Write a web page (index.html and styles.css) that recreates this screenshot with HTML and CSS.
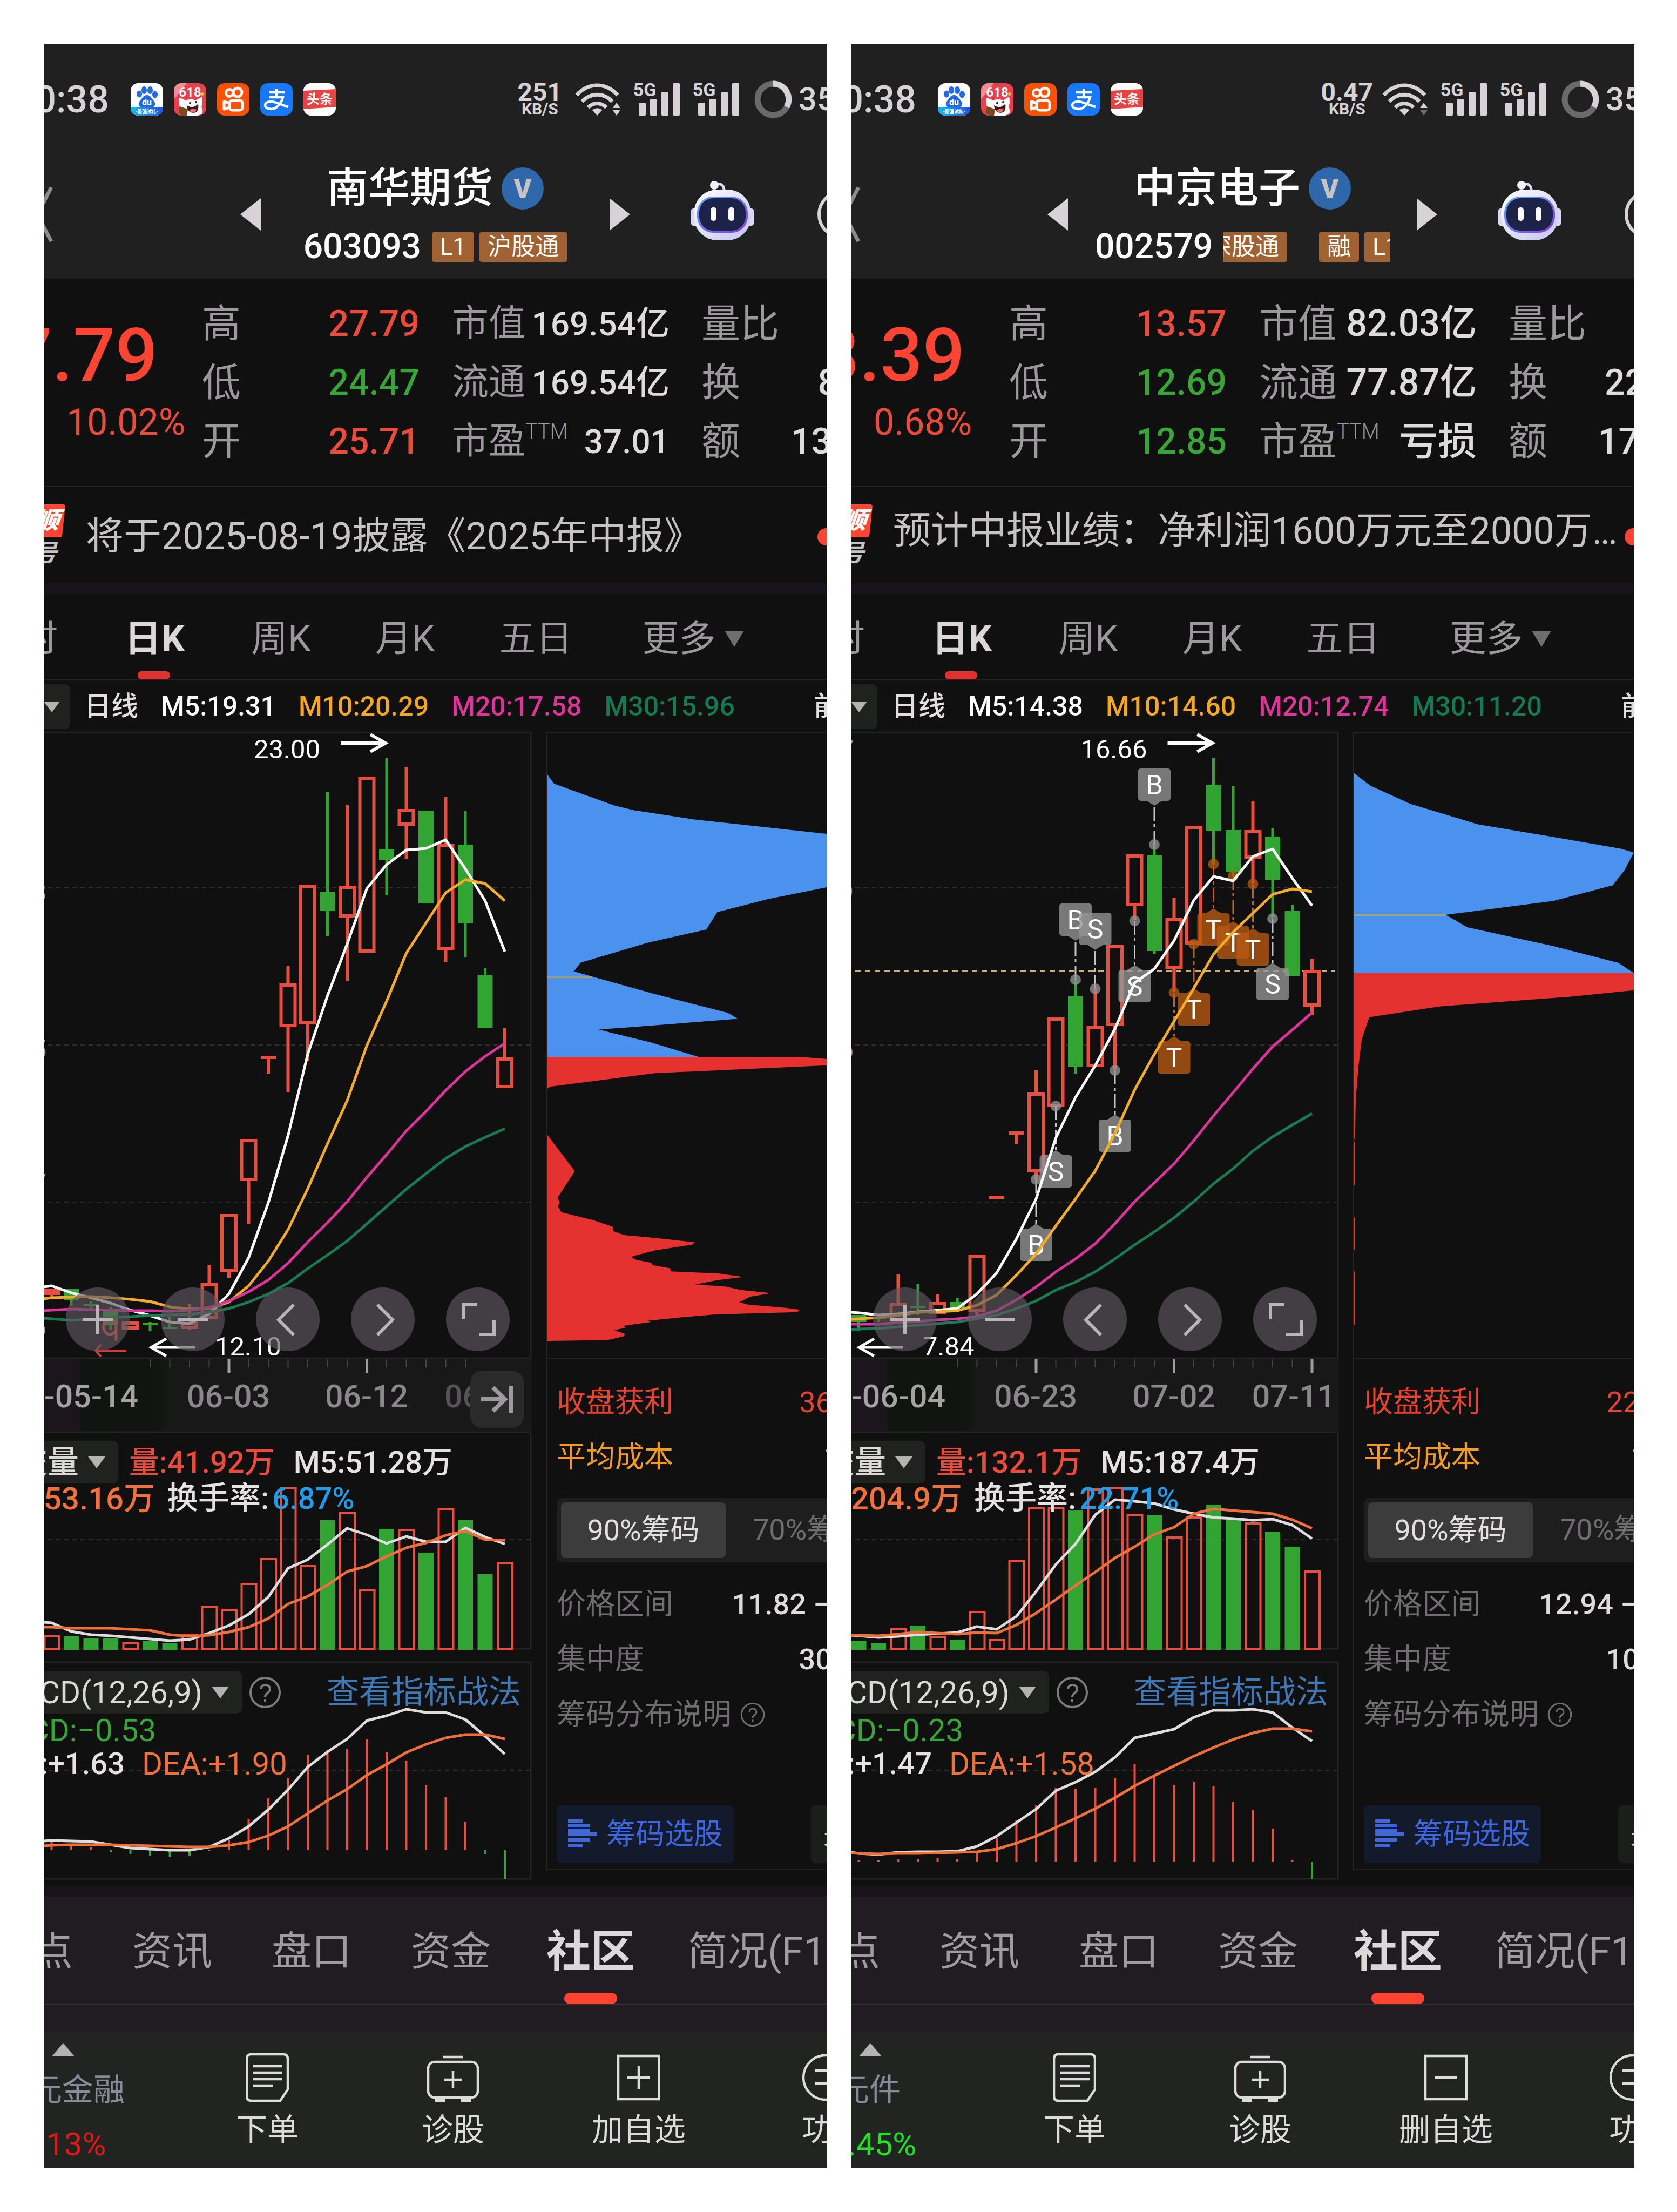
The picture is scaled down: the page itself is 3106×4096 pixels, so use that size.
FILE: index.html
```html
<!DOCTYPE html>
<html lang="zh-CN">
<head>
<meta charset="utf-8">
<title>行情对比</title>
<meta name="viewport" content="width=device-width, initial-scale=1">
<link rel="stylesheet" href="styles.css">
</head>
<body>

<svg class="sprite" aria-hidden="true">
  <defs>
    <linearGradient id="duFoot" x1="0" y1="0" x2="1" y2="0"><stop offset="0" stop-color="#19b8e8"/><stop offset="1" stop-color="#2450e6"/></linearGradient>
    <linearGradient id="head" x1="0" y1="0" x2="1" y2="1"><stop offset="0" stop-color="#ffffff"/><stop offset="1" stop-color="#c3c3ee"/></linearGradient>
    <linearGradient id="rim" x1="0" y1="0" x2="1" y2="1"><stop offset="0" stop-color="#58a8f0"/><stop offset="1" stop-color="#8a3be0"/></linearGradient>
  </defs>
  <symbol id="app-baidu" viewBox="0 0 60 60">
    <rect width="60" height="60" rx="14" fill="#fff"/>
    <path d="M0 44h60v2a14 14 0 0 1-14 14H14A14 14 0 0 1 0 46z" fill="url(#duFoot)"/>
    <g fill="#2468e8"><ellipse cx="16" cy="20" rx="5" ry="6.500"/><ellipse cx="25" cy="13" rx="5" ry="7"/><ellipse cx="36" cy="13" rx="5" ry="7"/><ellipse cx="45" cy="21" rx="5" ry="6.500"/><path d="M30 22c7 0 9 7 13 11 5 6 1 12-5 12-3 0-5-1-8-1s-5 1-8 1c-6 0-10-6-5-12 4-4 6-11 13-11z"/></g>
    <text x="30" y="41" class="app-text" font-size="16" fill="#fff">du</text>
    <text x="30" y="56" class="app-text" font-size="9" fill="#fff">·最强试炼·</text>
  </symbol>
  <symbol id="app-618" viewBox="0 0 60 60">
    <rect width="60" height="60" rx="14" fill="#ea3f4d"/>
    <path d="M0 14A14 14 0 0 1 14 0h10L0 30z" fill="#f78d90"/>
    <circle cx="53" cy="20" r="3" fill="#f8b23a"/>
    <path d="M9 27c7 1 9 3 13 5 6-3 13-3 18 0l12-7c2 8 1 14-1 19 3 5 3 9 1 13l-8 3H16l-2-8-4-11z" fill="#fff"/>
    <path d="M24 41c8 5 15 4 21-3 2 12-3 17-9 17-7 0-11-5-12-14z" fill="#3a1c1c"/>
    <path d="M29 50c4-3 9-4 13-1-3 7-10 8-13 1z" fill="#ef6b74"/>
    <circle cx="30" cy="37" r="2" fill="#222"/><circle cx="41" cy="35" r="2" fill="#222"/>
    <path d="M11 43l15 5-2 12H14c-3-2-5-5-5-8z" fill="#7c4a22"/>
    <text x="30" y="25" class="app-text" font-size="24" fill="#fff">618</text>
  </symbol>
  <symbol id="app-kuaishou" viewBox="0 0 60 60">
    <rect width="60" height="60" rx="14" fill="#ff5005"/>
    <g fill="none" stroke="#fff" stroke-width="5"><circle cx="23" cy="18" r="6.500"/><circle cx="38" cy="17" r="8"/><rect x="23" y="32" width="24" height="18" rx="5"/><path d="M23 37l-10-3v14l10-3" stroke-linejoin="round"/></g>
  </symbol>
  <symbol id="app-alipay" viewBox="0 0 60 60">
    <rect width="60" height="60" rx="14" fill="#1677ff"/>
    <g fill="none" stroke="#fff" stroke-width="4.500"><path d="M16 17h29M30 10v16M17 26h25c-2 9-11 22-21 22-7 0-12-3-12-7 0-5 5-7 11-7 8 0 16 5 32 10"/></g>
  </symbol>
  <symbol id="app-toutiao" viewBox="0 0 60 60">
    <rect width="60" height="60" rx="14" fill="#fff"/>
    <path d="M0 14l60-3v33L0 48z" fill="#ea4243"/>
    <text x="30" y="38" class="app-text" font-size="24" fill="#fff">头条</text>
  </symbol>
  <symbol id="i-wifi" viewBox="0 0 84 60">
    <g fill="none" stroke="#d6d2d5" stroke-width="7"><path d="M3 22c22-24 54-24 76 0"/><path d="M13 34c16-17 40-17 56 0"/><path d="M24 45c10-10 24-10 34 0"/></g>
    <path d="M41 60l-9-10c5-5 13-5 18 0z" fill="#d6d2d5"/>
    <path d="M77 36l7 10H70z" class="wifi-up"/><path d="M77 60l7-10H70z" class="wifi-down"/>
  </symbol>
  <symbol id="i-bars" viewBox="0 0 76 60">
    <g fill="#d6d2d5"><rect y="36" width="13" height="24" rx="2"/><rect x="21" y="29" width="13" height="31" rx="2"/><rect x="42" y="16" width="13" height="44" rx="2"/><rect x="63" width="13" height="60" rx="2"/></g>
  </symbol>
  <symbol id="i-ring" viewBox="0 0 70 70">
    <circle cx="35" cy="35" r="29" fill="none" stroke="#6b6a6b" stroke-width="11"/>
    <path d="M35 6a29 29 0 0 1 25 43" fill="none" stroke="#d6d2d5" stroke-width="11"/>
  </symbol>
  <symbol id="i-robot" viewBox="0 0 120 124">
    <path d="M46 8c10-6 18 0 17 12" fill="none" stroke="#d9d9ee" stroke-width="5"/>
    <circle cx="45" cy="8" r="8" fill="#f1f1fb"/>
    <rect x="1" y="50" width="16" height="34" rx="8" fill="#d9d8f4"/><rect x="103" y="50" width="16" height="34" rx="8" fill="#d9d8f4"/>
    <rect x="7" y="16" width="106" height="94" rx="44" fill="url(#head)"/>
    <rect x="13" y="29" width="94" height="67" rx="30" fill="url(#rim)"/>
    <rect x="17" y="32" width="86" height="60" rx="26" fill="#1d2348"/>
    <rect x="38" y="49" width="11" height="25" rx="5" fill="#fff"/><rect x="71" y="49" width="11" height="25" rx="5" fill="#fff"/>
  </symbol>
  <symbol id="i-help" viewBox="0 0 60 60">
    <circle cx="30" cy="30" r="27" fill="none" stroke="currentColor" stroke-width="4"/>
    <path d="M22 24c0-11 17-11 17 0 0 7-9 7-9 14M30 42v5" fill="none" stroke="currentColor" stroke-width="4"/>
  </symbol>
  <symbol id="i-chips" viewBox="0 0 54 54">
    <g fill="#3c66e2"><rect width="27" height="6"/><rect y="9" width="40" height="6"/><rect y="17" width="40" height="6"/><rect y="24" width="54" height="6"/><rect y="35" width="40" height="6"/><rect y="46" width="27" height="6"/></g>
  </symbol>
  <symbol id="i-order" viewBox="0 0 80 90">
    <g fill="none" stroke="#dedbdd" stroke-width="4.500"><path d="M10 2h60q8 0 8 9v56L64 88H10q-8 0-8-9V11q0-9 8-9z"/><path d="M13 24h55M13 36h55M13 48h55M13 60h38"/></g>
  </symbol>
  <symbol id="i-doctor" viewBox="0 0 96 90">
    <g fill="none" stroke="#dedbdd" stroke-width="4.500"><rect x="2" y="16" width="92" height="66" rx="12"/><path d="M30 7h37M48 33v32M32 49h32"/></g>
    <path d="M15 82h18v8H15zM63 82h18v8H63z" fill="#dedbdd"/>
  </symbol>
  <symbol id="i-add" viewBox="0 0 80 84">
    <path d="M2 2h76v80H2zM40 21v42M19 42h42" fill="none" stroke="#dedbdd" stroke-width="4.500"/>
  </symbol>
  <symbol id="i-remove" viewBox="0 0 80 84">
    <path d="M2 2h76v80H2zM19 42h42" fill="none" stroke="#dedbdd" stroke-width="4.500"/>
  </symbol>
  <symbol id="i-more" viewBox="0 0 88 88">
    <g fill="none" stroke="#dedbdd" stroke-width="4.500"><circle cx="44" cy="44" r="41"/><path d="M24 31h40M24 55h40"/></g>
  </symbol>
</svg>

<main class="board">

  <section class="phone" aria-label="南华期货">
    <header class="top">
      <div class="status">
        <span class="clock">0:38</span>
        <div class="apps">
          <svg><use href="#app-baidu"/></svg><svg><use href="#app-618"/></svg><svg><use href="#app-kuaishou"/></svg><svg><use href="#app-alipay"/></svg><svg><use href="#app-toutiao"/></svg>
        </div>
        <div class="signals">
          <div class="speed"><b>251</b><span>KB/S</span></div>
          <svg class="wifi"><use href="#i-wifi"/></svg>
          <div class="cell"><span>5G</span><svg><use href="#i-bars"/></svg></div>
          <div class="cell"><span>5G</span><svg><use href="#i-bars"/></svg></div>
          <svg class="ring"><use href="#i-ring"/></svg>
          <span class="battery">35</span>
        </div>
      </div>
      <div class="titlebar">
        <button class="plain" aria-label="返回"><svg class="back" viewBox="0 0 17 106"><path d="M14 3L-12 53l26 50" fill="none" stroke="#8d8b8d" stroke-width="7"/></svg></button>
        <button class="plain" aria-label="上一只"><svg class="step" viewBox="0 0 38 60"><path d="M38 0v60L0 30z" fill="#d6d2d5"/></svg></button>
        <div class="name">
          <h1>南华期货<span class="vip">V</span></h1>
          <div class="code"><span>603093</span><div class="marks"><i>L1</i><i>沪股通</i></div></div>
        </div>
        <button class="plain" aria-label="下一只"><svg class="step" viewBox="0 0 38 60"><path d="M0 0v60l38-30z" fill="#d6d2d5"/></svg></button>
        <span></span>
        <button class="plain" aria-label="助手"><svg class="robot"><use href="#i-robot"/></svg></button>
        <span></span>
        <button class="plain" aria-label="搜索"><svg class="search" viewBox="0 0 17 90"><circle cx="45" cy="45" r="42" fill="none" stroke="#d6d2d5" stroke-width="6"/></svg></button>
      </div>
    </header>

    <section class="quote">
      <div class="last"><strong>27.79</strong><span>10.02%</span></div>
      <dl class="range">
        <div><dt>高</dt><dd class="up">27.79</dd></div>
        <div><dt>低</dt><dd class="down">24.47</dd></div>
        <div><dt>开</dt><dd class="up">25.71</dd></div>
      </dl>
      <dl class="value compact">
        <div><dt>市值</dt><dd>169.54亿</dd></div>
        <div><dt>流通</dt><dd>169.54亿</dd></div>
        <div><dt>市盈<sup>TTM</sup></dt><dd>37.01</dd></div>
      </dl>
      <dl class="flow">
        <div><dt>量比</dt></div>
        <div><dt>换</dt><dd>8</dd></div>
        <div><dt>额</dt><dd class="amount">13</dd></div>
      </dl>
    </section>

    <a class="news" href="#news">
      <span class="flag"><b>顺</b><i>号</i></span>
      <span class="headline">将于2025-08-19披露《2025年中报》</span>
      <span class="dot"></span>
    </a>

    <nav class="periods">
      <button>时</button><button class="on">日K</button><button>周K</button><button>月K</button><button>五日</button><button class="more">更多<svg class="tri" viewBox="0 0 36 30"><path d="M0 0h36L18 30z" fill="#6f6d6f"/></svg></button>
    </nav>

    <div class="averages">
      <button class="fold" aria-label="周期"><svg viewBox="0 0 30 20"><path d="M0 0h30L15 20z" fill="#b5b2b4"/></svg></button>
      <span>日线</span><span class="m5">M5:19.31</span><span class="m10">M10:20.29</span><span class="m20">M20:17.58</span><span class="m30">M30:15.96</span><span class="adjust">前</span>
    </div>

    <div class="market">
      <div class="charts">
        <div class="kline">
          <svg viewBox="0 0 904 1162" data-chart="kline" data-code="603093"></svg>
          <div class="controls">
            <button aria-label="放大"><svg viewBox="0 0 118 118"><path d="M59 32v54M31 59h56"/></svg></button>
            <button aria-label="缩小"><svg viewBox="0 0 118 118"><path d="M31 59h56"/></svg></button>
            <button aria-label="左移"><svg viewBox="0 0 118 118"><path d="M70 32L42 60l28 28"/></svg></button>
            <button aria-label="右移"><svg viewBox="0 0 118 118"><path d="M49 32l28 28-28 28"/></svg></button>
            <button aria-label="全屏"><svg viewBox="0 0 118 118"><path d="M32 58V32h26M61 87h28V61"/></svg></button>
          </div>
        </div>
        <div class="axis">
          <svg viewBox="0 0 904 133" data-chart="axis" data-code="603093"></svg>
          <button class="latest" aria-label="最新"><svg viewBox="0 0 60 50"><path d="M0 25h42M22 3l22 22-22 22M56 0v50"/></svg></button>
        </div>
        <div class="layer">
          <svg viewBox="0 0 904 406" data-chart="volume" data-code="603093"></svg>
          <div class="legend">
            <div class="row"><button class="tag vol">交量<svg viewBox="0 0 32 22"><path d="M0 0h32L16 22z" fill="#b5b2b4"/></svg></button><span class="up">量:41.92万</span><span>M5:51.28万</span></div>
            <div class="row second"><span class="ma">53.16万</span><span>换手率:<em>6.87%</em></span></div>
          </div>
        </div>
        <div class="layer macd">
          <svg viewBox="0 0 904 405" data-chart="macd" data-code="603093"></svg>
          <div class="legend">
            <div class="row"><button class="tag ind">CD(12,26,9)<svg viewBox="0 0 32 22"><path d="M0 0h32L16 22z" fill="#b5b2b4"/></svg></button><svg class="help"><use href="#i-help"/></svg><a href="#guide">查看指标战法</a></div>
            <div class="row bar"><span class="down">CD:−0.53</span></div>
            <div class="row diff"><span>:+1.63</span><span class="ma">DEA:+1.90</span></div>
          </div>
        </div>
      </div>
      <aside class="chips">
        <svg class="profile" viewBox="60 -34 1453 1582" preserveAspectRatio="none">
          <path fill="#4a92ee" d="M60 70L97 95 410 150 510 162 820 185 1440 218 1515 222V357L1210 387 945 420 888 464 580 498 235 548 200 570 600 625 1000 675 1052 690 820 699 480 712 330 717 390 725 600 750 850 787H60z"/>
          <path fill="#e53230" d="M60 787H1385L1515 792V808L620 828 300 848 75 862 60 868zM60 983L205 1076 115 1143 127 1155 117 1165 135 1180 300 1200 403 1217 405 1228 460 1238 620 1245 828 1256 815 1262 620 1277 497 1293 520 1300 600 1308 610 1314 700 1322 703 1330 950 1335 1082 1344 945 1352 830 1363 985 1368 1070 1377 1225 1385 1115 1394 1060 1408 1105 1414 1300 1422 1375 1427 1360 1433 930 1439 740 1447 580 1455 600 1458 455 1468 470 1472 410 1479 465 1488 460 1494 375 1504 60 1506z"/>
          <path fill="#b3a25c" d="M60 583h232v4H60z"/>
        </svg>
        <div class="chipinfo">
          <p class="profit"><span>收盘获利</span><b>36</b></p>
          <p class="cost"><span>平均成本</span><b>1</b></p>
          <div class="seg"><button class="on">90%筹码</button><button>70%筹</button></div>
          <p><span>价格区间</span><b>11.82 –</b></p>
          <p><span>集中度</span><b>30</b></p>
          <p class="explain"><span>筹码分布说明</span><svg><use href="#i-help"/></svg></p>
          <div class="actions"><button class="pick"><svg><use href="#i-chips"/></svg>筹码选股</button><button class="close">关</button></div>
        </div>
      </aside>
    </div>

    <nav class="sections">
      <a href="#points">点</a><a href="#info">资讯</a><a href="#depth">盘口</a><a href="#funds">资金</a><a class="on" href="#club">社区</a><a href="#brief">简况(F1</a>
    </nav>

    <footer class="toolbar">
      <div class="sector"><svg viewBox="0 0 42 25"><path d="M0 25h42L21 0z" fill="#b5b2b4"/></svg><span>元金融</span><b class="hot">13%</b></div>
      <button><svg class="w80"><use href="#i-order"/></svg>下单</button>
      <button><svg class="w96"><use href="#i-doctor"/></svg>诊股</button>
      <button><svg class="w80"><use href="#i-add"/></svg>加自选</button>
      <button class="edge"><svg class="w88"><use href="#i-more"/></svg>功</button>
    </footer>
  </section>

  <section class="phone" aria-label="中京电子">
    <header class="top">
      <div class="status">
        <span class="clock">0:38</span>
        <div class="apps">
          <svg><use href="#app-baidu"/></svg><svg><use href="#app-618"/></svg><svg><use href="#app-kuaishou"/></svg><svg><use href="#app-alipay"/></svg><svg><use href="#app-toutiao"/></svg>
        </div>
        <div class="signals">
          <div class="speed"><b>0.47</b><span>KB/S</span></div>
          <svg class="wifi idle"><use href="#i-wifi"/></svg>
          <div class="cell"><span>5G</span><svg><use href="#i-bars"/></svg></div>
          <div class="cell"><span>5G</span><svg><use href="#i-bars"/></svg></div>
          <svg class="ring"><use href="#i-ring"/></svg>
          <span class="battery">35</span>
        </div>
      </div>
      <div class="titlebar">
        <button class="plain" aria-label="返回"><svg class="back" viewBox="0 0 17 106"><path d="M14 3L-12 53l26 50" fill="none" stroke="#8d8b8d" stroke-width="7"/></svg></button>
        <button class="plain" aria-label="上一只"><svg class="step" viewBox="0 0 38 60"><path d="M38 0v60L0 30z" fill="#d6d2d5"/></svg></button>
        <div class="name">
          <h1>中京电子<span class="vip">V</span></h1>
          <div class="code"><span>002579</span><div class="marks ticker"><i>深股通</i><i class="margin">融</i><i>L1</i></div></div>
        </div>
        <button class="plain" aria-label="下一只"><svg class="step" viewBox="0 0 38 60"><path d="M0 0v60l38-30z" fill="#d6d2d5"/></svg></button>
        <span></span>
        <button class="plain" aria-label="助手"><svg class="robot"><use href="#i-robot"/></svg></button>
        <span></span>
        <button class="plain" aria-label="搜索"><svg class="search" viewBox="0 0 17 90"><circle cx="45" cy="45" r="42" fill="none" stroke="#d6d2d5" stroke-width="6"/></svg></button>
      </div>
    </header>

    <section class="quote">
      <div class="last"><strong>13.39</strong><span>0.68%</span></div>
      <dl class="range">
        <div><dt>高</dt><dd class="up">13.57</dd></div>
        <div><dt>低</dt><dd class="down">12.69</dd></div>
        <div><dt>开</dt><dd class="down">12.85</dd></div>
      </dl>
      <dl class="value">
        <div><dt>市值</dt><dd>82.03亿</dd></div>
        <div><dt>流通</dt><dd>77.87亿</dd></div>
        <div><dt>市盈<sup>TTM</sup></dt><dd class="word">亏损</dd></div>
      </dl>
      <dl class="flow">
        <div><dt>量比</dt></div>
        <div><dt>换</dt><dd>22</dd></div>
        <div><dt>额</dt><dd class="amount">17</dd></div>
      </dl>
    </section>

    <a class="news raised" href="#news">
      <span class="flag"><b>顺</b><i>号</i></span>
      <span class="headline">预计中报业绩：净利润1600万元至2000万…</span>
      <span class="dot"></span>
    </a>

    <nav class="periods">
      <button>时</button><button class="on">日K</button><button>周K</button><button>月K</button><button>五日</button><button class="more">更多<svg class="tri" viewBox="0 0 36 30"><path d="M0 0h36L18 30z" fill="#6f6d6f"/></svg></button>
    </nav>

    <div class="averages">
      <button class="fold" aria-label="周期"><svg viewBox="0 0 30 20"><path d="M0 0h30L15 20z" fill="#b5b2b4"/></svg></button>
      <span>日线</span><span class="m5">M5:14.38</span><span class="m10">M10:14.60</span><span class="m20">M20:12.74</span><span class="m30">M30:11.20</span><span class="adjust">前</span>
    </div>

    <div class="market">
      <div class="charts">
        <div class="kline">
          <svg viewBox="0 0 904 1162" data-chart="kline" data-code="002579"></svg>
          <div class="controls">
            <button aria-label="放大"><svg viewBox="0 0 118 118"><path d="M59 32v54M31 59h56"/></svg></button>
            <button aria-label="缩小"><svg viewBox="0 0 118 118"><path d="M31 59h56"/></svg></button>
            <button aria-label="左移"><svg viewBox="0 0 118 118"><path d="M70 32L42 60l28 28"/></svg></button>
            <button aria-label="右移"><svg viewBox="0 0 118 118"><path d="M49 32l28 28-28 28"/></svg></button>
            <button aria-label="全屏"><svg viewBox="0 0 118 118"><path d="M32 58V32h26M61 87h28V61"/></svg></button>
          </div>
        </div>
        <div class="axis">
          <svg viewBox="0 0 904 133" data-chart="axis" data-code="002579"></svg>
        </div>
        <div class="layer">
          <svg viewBox="0 0 904 406" data-chart="volume" data-code="002579"></svg>
          <div class="legend">
            <div class="row"><button class="tag vol">交量<svg viewBox="0 0 32 22"><path d="M0 0h32L16 22z" fill="#b5b2b4"/></svg></button><span class="up">量:132.1万</span><span>M5:187.4万</span></div>
            <div class="row second"><span class="ma">204.9万</span><span>换手率:<em>22.71%</em></span></div>
          </div>
        </div>
        <div class="layer macd">
          <svg viewBox="0 0 904 405" data-chart="macd" data-code="002579"></svg>
          <div class="legend">
            <div class="row"><button class="tag ind">CD(12,26,9)<svg viewBox="0 0 32 22"><path d="M0 0h32L16 22z" fill="#b5b2b4"/></svg></button><svg class="help"><use href="#i-help"/></svg><a href="#guide">查看指标战法</a></div>
            <div class="row bar"><span class="down">CD:−0.23</span></div>
            <div class="row diff"><span>:+1.47</span><span class="ma">DEA:+1.58</span></div>
          </div>
        </div>
      </div>
      <aside class="chips">
        <svg class="profile" viewBox="0 0 519 1160" preserveAspectRatio="none">
          <path fill="#4a92ee" d="M0 75L30 98 105 132 230 170 350 190 495 215 519 222 502 255 480 283 370 312 170 338 210 361 370 396 490 427 519 446H0z"/>
          <path fill="#e53230" d="M0 446H519V478L400 490 160 508 28 528 14 570 8 620 3 680 2 740 0 760z"/>
          <path fill="#e53230" d="M0 760h2v80H0zM0 900h2v60H0zM0 1000h2v100H0z"/>
          <path fill="#b3a25c" d="M0 337h170v3H0z"/>
        </svg>
        <div class="chipinfo">
          <p class="profit"><span>收盘获利</span><b>22</b></p>
          <p class="cost"><span>平均成本</span><b>1</b></p>
          <div class="seg"><button class="on">90%筹码</button><button>70%筹</button></div>
          <p><span>价格区间</span><b>12.94 –</b></p>
          <p><span>集中度</span><b>10</b></p>
          <p class="explain"><span>筹码分布说明</span><svg><use href="#i-help"/></svg></p>
          <div class="actions"><button class="pick"><svg><use href="#i-chips"/></svg>筹码选股</button><button class="close">关</button></div>
        </div>
      </aside>
    </div>

    <nav class="sections">
      <a href="#points">点</a><a href="#info">资讯</a><a href="#depth">盘口</a><a href="#funds">资金</a><a class="on" href="#club">社区</a><a href="#brief">简况(F1</a>
    </nav>

    <footer class="toolbar">
      <div class="sector"><svg viewBox="0 0 42 25"><path d="M0 25h42L21 0z" fill="#b5b2b4"/></svg><span>元件</span><b class="cool">.45%</b></div>
      <button><svg class="w80"><use href="#i-order"/></svg>下单</button>
      <button><svg class="w96"><use href="#i-doctor"/></svg>诊股</button>
      <button><svg class="w80"><use href="#i-remove"/></svg>删自选</button>
      <button class="edge"><svg class="w88"><use href="#i-more"/></svg>功</button>
    </footer>
  </section>

</main>
<script src="charts.js"></script>
</body>
</html>
```

FILE: styles.css
```css
* { box-sizing: border-box; }

body {
  margin: 0;
  background: #fff;
  color: #dedbdd;
  font-family: Roboto, "Noto Sans CJK SC", sans-serif;
}

h1, p, dl, dd { margin: 0; }
svg { display: block; flex: none; }
i, em { font-style: normal; }
a { color: inherit; text-decoration: none; }
button {
  margin: 0;
  padding: 0;
  border: 0;
  background: none;
  color: inherit;
  font: inherit;
  white-space: nowrap;
}

.sprite { position: absolute; width: 0; height: 0; }
.app-text { font-family: Roboto, "Noto Sans CJK SC", sans-serif; font-weight: 700; text-anchor: middle; }

.board {
  display: grid;
  grid-template-columns: minmax(0, 1fr) minmax(0, 1fr);
  gap: 45px;
  padding: 81px 80px 81px 81px;
}
.phone { overflow: hidden; background: #101010; }
.up { color: #ec4a3a; }
.down { color: #36a636; }

/* status bar and title */
.top { background: #202020; }
.status {
  display: flex;
  align-items: center;
  padding-top: 68px;
  color: #d6d2d5;
  font-weight: 500;
  white-space: nowrap;
}
.clock { display: flex; flex: none; justify-content: flex-end; width: 121px; font-size: 70px; line-height: 64px; }
.apps { display: flex; gap: 20px; margin-left: 40px; }
.apps svg { width: 60px; height: 60px; }
.signals { display: flex; align-items: center; gap: 24px; margin-left: auto; margin-right: -16px; }
.speed { display: flex; flex-direction: column; align-items: center; width: 94px; margin-right: -6px; }
.speed b { font-size: 48px; line-height: 36px; font-weight: 700; }
.speed span { font-size: 30px; line-height: 26px; font-weight: 700; }
.wifi { width: 84px; height: 60px; color: #d6d2d5; }
.wifi.idle { color: #6b6a6b; }
.wifi-up { fill: #d6d2d5; }
.wifi-down { fill: currentColor; }
.cell { display: grid; width: 86px; }
.cell span { grid-area: 1 / 1; font-size: 34px; line-height: 24px; font-weight: 700; }
.cell svg { grid-area: 1 / 1; justify-self: end; width: 76px; height: 60px; }
.ring { width: 70px; height: 70px; margin-left: 4px; }
.battery { margin-left: -12px; font-size: 60px; line-height: 64px; }

.titlebar {
  display: grid;
  grid-template-columns: minmax(0, 364fr) minmax(0, 38fr) minmax(0, 646fr) minmax(0, 39fr) minmax(0, 110fr) minmax(0, 120fr) minmax(0, 116fr) minmax(0, 17fr);
  align-items: center;
  padding: 86px 0 27px;
}
.back { width: 17px; height: 106px; }
.step { width: 38px; height: 60px; }
.robot { width: 120px; height: 124px; }
.search { width: 17px; height: 90px; }
.name { display: flex; flex-direction: column; align-items: center; gap: 36px; padding-top: 4px; color: #fff; white-space: nowrap; }
.name h1 { display: flex; align-items: center; gap: 16px; font-size: 77px; line-height: 80px; font-weight: 500; }
.vip {
  width: 78px;
  height: 78px;
  border-radius: 50%;
  background: #2f68aa;
  color: #c6c2c5;
  font-size: 50px;
  line-height: 80px;
  font-weight: 900;
  text-align: center;
}
.code { display: flex; align-items: center; gap: 20px; font-size: 64px; line-height: 64px; font-weight: 500; }
.marks { display: flex; gap: 10px; font-size: 44px; line-height: 55px; font-weight: 400; }
.marks i { flex: none; padding: 0 15px; border-radius: 4px; background: #a06232; }
.marks.ticker { width: 308px; overflow: hidden; }
.marks.ticker i:first-child { margin-left: -44px; }
.marks .margin { margin-left: 49px; }

/* quote */
.quote {
  display: grid;
  grid-template-columns: minmax(0, 293fr) minmax(0, 463fr) minmax(0, 462fr) minmax(0, 232fr);
  padding: 29px 0 28px;
  border-bottom: 2px solid #262626;
  white-space: nowrap;
}
.last { display: flex; flex-direction: column; color: #ff4432; }
.last strong {
  display: flex;
  justify-content: flex-end;
  width: 211px;
  padding-top: 42px;
  font-size: 138px;
  line-height: 142px;
  font-weight: 500;
}
.last span { padding-left: 42px; font-size: 68px; line-height: 106px; color: #ec4a3a; }
.quote dl > div { display: flex; justify-content: space-between; align-items: center; font-size: 66px; line-height: 109px; }
.quote .value > div { font-size: 68px; }
.quote dt { color: #9b999b; font-size: 72px; font-weight: 400; display: flex; }
.quote dd { font-weight: 500; }
.range { padding-right: 60px; }
.value { padding-right: 59px; }
.value sup { align-self: flex-start; font-size: 38px; line-height: 72px; font-weight: 300; }
.quote .compact > div { font-size: 62px; }
.quote .compact dt { font-size: 68px; }
.value .word { font-size: 72px; }
.flow { width: 253px; }
.flow .amount { padding-right: 12px; }

/* news */
.news { display: flex; align-items: center; padding: 32px 0 26px; line-height: 119px; white-space: nowrap; color: #c6c3c5; }
.flag { display: flex; flex-direction: column; align-items: flex-end; width: 37px; font-size: 44px; font-weight: 700; }
.flag b { padding: 0 8px; line-height: 61px; border-radius: 4px; background: #ff4432; color: #fff; font-style: italic; transform: skewX(-6deg); }
.flag i { padding-right: 12px; line-height: 58px; font-style: italic; }
.headline { margin-left: 41px; font-size: 70px; }
.raised .headline { padding-bottom: 20px; line-height: 99px; }
.dot { flex: none; width: 32px; height: 32px; margin-left: auto; margin-right: -15px; border-radius: 50%; background: #ff4432; }

/* period tabs */
.periods {
  display: flex;
  gap: 119px;
  padding-top: 8px;
  border-top: 21px solid #18141b;
  border-bottom: 2px solid #222;
  font-size: 68px;
  line-height: 150px;
  color: #9b999b;
}
.periods button { flex: none; }
.periods button:first-child { margin-left: -42px; margin-right: 5px; }
.periods .on { position: relative; margin-right: 4px; color: #dcd8da; font-weight: 700; }
.periods .on::after {
  content: "";
  position: absolute;
  bottom: 0;
  left: 50%;
  width: 60px;
  height: 15px;
  margin-left: -32px;
  border-radius: 7px;
  background: #e03131;
}
.periods .more { display: flex; align-items: center; gap: 16px; margin-left: 10px; }
.tri { width: 36px; height: 30px; }

/* moving averages */
.averages { display: flex; align-items: center; gap: 42px; padding: 7px 0 5px; font-size: 50px; line-height: 83px; font-weight: 500; white-space: nowrap; color: #e2dfe1; }
.fold { flex: none; width: 49px; height: 83px; margin-right: -16px; border-radius: 0 10px 10px 0; background: #20221f; }
.fold svg { width: 30px; height: 20px; }
.m5 { color: #fff; }
.m10 { color: #f5a81c; }
.m20 { color: #e0349c; }
.m30 { color: #127a54; }
.adjust { margin-left: 104px; }

/* charts */
.market { display: grid; grid-template-columns: minmax(0, 904fr) minmax(0, 546fr); padding-bottom: 11px; }
.charts svg[data-chart] { width: 100%; height: auto; }
.kline, .axis { position: relative; }
.controls { position: absolute; left: 41px; bottom: 15px; display: flex; gap: 58px; }
.controls button { width: 118px; height: 118px; border-radius: 50%; background: rgba(96, 88, 96, .65); }
.controls path, .latest path { fill: none; stroke: #b8b4b7; stroke-width: 6; }
.axis { background: linear-gradient(90deg, #1a161c 0 67px, #111511 67px 210px, #181818 240px); }
.latest { position: absolute; top: 21px; right: 15px; width: 99px; height: 106px; border-radius: 22px; background: #2a2a2a; }
.latest svg { width: 60px; height: 50px; margin: auto; }
.latest path { stroke: #9c9a9c; stroke-width: 8; }

.layer { display: grid; }
.layer > svg, .legend { grid-area: 1 / 1; }
.layer.macd { margin-top: 20px; }
.legend { padding-top: 18px; font-size: 56px; line-height: 58px; font-weight: 500; white-space: nowrap; color: #e6e2e4; overflow: hidden; }
.row { display: flex; align-items: center; }
.row .ma { color: #f2703a; }
.row em { color: #1f9cea; }
.tag { display: flex; flex: none; justify-content: flex-end; align-items: center; gap: 17px; padding-right: 24px; height: 79px; border-radius: 0 10px 10px 0; background: #20221f; font-size: 58px; font-weight: 400; color: #dcd8da; }
.tag svg { width: 32px; height: 22px; }
.tag.vol { width: 138px; margin-right: 20px; font-weight: 500; }
.tag.ind { width: 367px; }
.row .up { margin-right: 35px; }
.second { gap: 22px; margin-top: -2px; font-size: 58px; }
.second em { margin-left: 6px; font-size: 56px; }
.macd .legend { font-size: 58px; line-height: 62px; font-weight: 400; }
.help { width: 60px; height: 60px; margin-left: 13px; color: #7d7b7d; }
.row a { margin-left: auto; padding-right: 20px; font-size: 60px; color: #3f78b6; }
.row.bar span { display: flex; justify-content: flex-end; width: 208px; }
.diff span:first-child { display: flex; justify-content: flex-end; width: 150px; margin-right: 32px; font-size: 56px; font-weight: 500; }

/* candle artwork */
.up-candle { fill: #101010; stroke: #ea4d3d; stroke-width: 6; }
.down-candle { fill: #32a432; }
.up-wick { stroke: #ea4d3d; stroke-width: 6; }
.down-wick { stroke: #32a432; stroke-width: 5; }
.trend { fill: none; stroke-width: 5; stroke-linejoin: round; }
.frame { fill: none; stroke: #232323; stroke-width: 3; }
.grid { stroke: #2e2e2e; stroke-width: 2; stroke-dasharray: 8 7; }
.price-line { stroke: #d2ad74; stroke-width: 3; stroke-dasharray: 10 8; }
.pin { font-family: Roboto, sans-serif; font-size: 50px; fill: #fff; text-anchor: middle; }
.extreme { font-family: Roboto, sans-serif; font-size: 49px; fill: #fff; }
.scale { font-family: Roboto, sans-serif; font-size: 48px; fill: #a09ea0; text-anchor: end; }
.date { font-family: Roboto, sans-serif; font-size: 59px; font-weight: 500; fill: #8a888a; }

/* chip distribution */
.chips { margin-left: 26px; border-left: 2px solid #232323; border-top: 2px solid #232323; align-self: start; overflow: hidden; }
.profile { width: 100%; height: auto; aspect-ratio: 519 / 1159; }
.chipinfo {
  display: flex;
  flex-direction: column;
  gap: 32px;
  padding: 46px 0 11px 18px;
  border-top: 2px solid #232323;
  border-bottom: 2px solid #232323;
  font-size: 54px;
  line-height: 70px;
  white-space: nowrap;
  color: #6f6d6f;
}
.chipinfo p { display: flex; justify-content: space-between; margin-right: -10px; }
.chipinfo b { font-weight: 500; color: #dedbdd; }
.chipinfo .profit, .profit b { color: #e8432f; }
.chipinfo .cost, .cost b { color: #f39a1f; }
.chipinfo .cost { margin-right: -24px; }
.chipinfo .profit b, .chipinfo .cost b { font-weight: 400; color: inherit; }
.seg { display: flex; align-items: center; gap: 50px; margin: 8px 0 11px; padding: 8px; border-radius: 10px 0 0 10px; background: #1e1e1e; }
.seg .on { flex: none; width: 305px; line-height: 103px; border-radius: 8px; background: #3c3c3c; color: #e2dfe1; }
.explain svg { width: 46px; height: 46px; margin-right: auto; margin-left: 16px; align-self: center; }
.actions { display: flex; gap: 143px; margin-top: 101px; line-height: 107px; }
.pick { display: flex; flex: none; align-items: center; gap: 17px; width: 328px; padding-left: 21px; border-radius: 8px; background: #131a2b; color: #3c66e2; }
.pick svg { width: 54px; height: 54px; }
.close { padding-left: 22px; border-radius: 8px 0 0 8px; background: #1b1f1b; color: #c6c3c5; }

/* page sections */
.sections {
  display: flex;
  align-items: center;
  gap: 110px;
  padding: 4px 0 52px;
  border-top: 20px solid #18141a;
  background: linear-gradient(#343034, #343034) 0 198px / 100% 2px no-repeat, #211c22;
  font-size: 74px;
  line-height: 196px;
  white-space: nowrap;
  color: #9f9c9f;
}
.sections a:first-child { margin-left: -20px; }
.sections .on { position: relative; margin: 0 -12px 0 -7px; font-size: 82px; font-weight: 700; color: #dcd8da; }
.sections .on::after {
  content: "";
  position: absolute;
  bottom: 1px;
  left: 50%;
  width: 98px;
  height: 21px;
  margin-left: -49px;
  border-radius: 10px;
  background: #ff4432;
}

/* bottom toolbar */
.toolbar {
  display: grid;
  grid-template-columns: minmax(0, 242fr) repeat(3, minmax(0, 344fr)) minmax(0, 176fr);
  background: #222422;
  font-size: 58px;
  line-height: 64px;
  white-space: nowrap;
}
.toolbar button { display: flex; flex-direction: column; align-items: center; justify-content: flex-end; gap: 20px; padding: 38px 0 39px; }
.toolbar .edge { align-items: flex-start; padding-left: 130px; }
.w80 { width: 80px; height: 90px; }
.w96 { width: 96px; height: 90px; }
.w88 { width: 88px; height: 90px; }
.sector { display: flex; flex-direction: column; align-items: flex-start; padding-top: 19px; }
.sector svg { width: 42px; height: 25px; margin-left: 15px; }
.sector span { margin: 30px 0 0 -24px; color: #878b98; }
.sector b { margin: 37px 0 0 4px; font-size: 60px; font-weight: 400; }
.sector .hot { color: #e51616; }
.sector .cool { margin-left: -6px; color: #22e322; }
```

FILE: charts.js
```js
// Candles are spaced evenly; slot 0 sits under the first major date tick.
const ORIGIN = 343;
const STEP = 36.5;
const FIRST = -9;
const RED = '#ea4d3d';
const GREEN = '#32a432';
const slotX = k => ORIGIN + STEP * k;

// candle: [slot, direction, high, body top, body bottom, low]
const STOCKS = {
  '603093': {
    candles: [
      [-9, 1, 1032, 1032, 1043, 1048], [-8, 0, 1032, 1032, 1053, 1063], [-7, 0, 1054, 1060, 1064, 1071],
      [-6, 0, 1065, 1073, 1099, 1108], [-5, 1, 1092, 1092, 1107, 1107], [-4, 0, 1093, 1095, 1099, 1110],
      [-3, 0, 1084, 1102, 1106, 1106], [-2, 1, 1060, 1093, 1106, 1108], [-1, 1, 987, 1021, 1087, 1087],
      [0, 1, 893, 893, 1001, 1011], [1, 1, 754, 754, 832, 912], [2, 1, 603, 603, 603, 633],
      [3, 1, 434, 466, 547, 668], [4, 1, 283, 283, 542, 610], [5, 0, 111, 297, 332, 378],
      [6, 1, 136, 285, 344, 461], [7, 1, 83, 83, 409, 409], [8, 0, 49, 217, 237, 303],
      [9, 1, 66, 143, 174, 235], [10, 0, 146, 146, 318, 318], [11, 1, 121, 207, 405, 427],
      [12, 0, 147, 209, 355, 418], [13, 0, 438, 451, 549, 549], [14, 1, 549, 603, 660, 660]
    ],
    ma: {
      '#ffffff': [1028, 1026, 1039, 1048, 1058, 1071, 1081, 1093, 1096, 1078, 1041, 974, 872, 748, 597, 489, 393, 290, 246, 219, 216, 200, 254, 313, 407],
      '#f3ab28': [1050, 1048, 1047, 1046, 1048, 1051, 1055, 1065, 1069, 1068, 1056, 1026, 980, 922, 846, 763, 683, 581, 499, 410, 354, 298, 274, 281, 313],
      '#dd349c': [1072, 1071, 1069, 1070, 1071, 1072, 1072, 1073, 1071, 1066, 1054, 1037, 1015, 984, 945, 909, 870, 825, 783, 739, 703, 664, 629, 601, 577],
      '#197a58': [1086, 1087, 1090, 1088, 1085, 1083, 1081, 1080, 1079, 1075, 1068, 1056, 1041, 1021, 994, 969, 943, 911, 879, 847, 818, 790, 768, 751, 735]
    },
    pins: [],
    high: { slot: 8, text: '23.00' },
    low: { x: 197, text: '12.10' },
    scale: [[314, '8'], [605, '5'], [852, '7'], [1120, '6']],
    note: true,
    dates: [[175, '-05-14', 'end', '#a5a2a4'], [342, '06-03', 'middle'], [598, '06-12', 'middle'], [742, '06', 'start', '#555355']],
    ticks: [0, 7],
    lastTick: 12,
    volume: [[1, 378], [0, 380], [0, 384], [0, 384], [1, 391], [0, 389], [0, 393], [1, 375], [1, 324], [1, 329], [1, 281], [1, 235], [1, 104], [1, 248], [0, 165], [1, 150], [1, 293], [0, 181], [1, 181], [0, 225], [1, 142], [0, 165], [0, 265], [1, 243]],
    volumeMa: {
      '#dedcdd': [354, 355, 371, 377, 379, 382, 385, 388, 386, 374, 360, 339, 307, 254, 238, 210, 180, 192, 208, 195, 205, 205, 179, 196, 209],
      '#ee6f3a': [363, 363, 365, 365, 365, 367, 369, 377, 380, 378, 372, 363, 347, 320, 306, 285, 260, 250, 232, 216, 207, 193, 185, 201, 202]
    },
    zero: 350,
    macd: [335, 341, 344, 353, 357, 361, 363, 361, 352, 332, 292, 254, 216, 173, 165, 162, 145, 169, 184, 229, 252, 297, 357, 404],
    macdLines: {
      '#dedcdd': [333, 332, 333, 334, 340, 346, 348, 350, 350, 344, 328, 306, 275, 238, 196, 168, 144, 110, 101, 89, 95, 95, 108, 139, 172],
      '#ee6f3a': [342, 341, 340, 340, 340, 341, 342, 343, 344, 344, 341, 335, 323, 306, 282, 258, 237, 211, 191, 169, 154, 142, 136, 136, 144]
    }
  },
  '002579': {
    candles: [
      [-9, 0, 1080, 1080, 1093, 1110], [-8, 0, 1082, 1084, 1088, 1093], [-7, 1, 1005, 1058, 1082, 1082],
      [-6, 0, 1023, 1063, 1067, 1080], [-5, 1, 1041, 1056, 1078, 1078], [-4, 0, 1048, 1056, 1067, 1067],
      [-3, 1, 968, 968, 1074, 1082], [-2, 1, 862, 862, 862, 862], [-1, 1, 743, 743, 743, 764],
      [0, 1, 627, 668, 816, 828], [1, 1, 529, 529, 695, 695], [2, 0, 458, 489, 620, 633],
      [3, 1, 475, 545, 621, 621], [4, 1, 395, 395, 545, 626], [5, 1, 227, 227, 323, 348],
      [6, 0, 207, 229, 406, 411], [7, 1, 308, 345, 439, 481], [8, 1, 174, 174, 394, 394],
      [9, 0, 49, 98, 184, 244], [10, 0, 101, 182, 260, 267], [11, 1, 128, 182, 235, 281],
      [12, 0, 178, 194, 274, 344], [13, 0, 320, 332, 452, 452], [14, 1, 420, 441, 509, 525]
    ],
    ma: {
      '#ffffff': [1075, 1076, 1080, 1078, 1074, 1071, 1068, 1041, 1002, 939, 865, 752, 677, 618, 550, 465, 439, 387, 312, 268, 276, 231, 217, 271, 322],
      '#f3ab28': [1088, 1087, 1085, 1081, 1075, 1074, 1072, 1062, 1043, 1006, 967, 915, 865, 813, 744, 663, 597, 536, 475, 412, 371, 336, 301, 291, 296],
      '#dd349c': [1097, 1097, 1097, 1094, 1092, 1089, 1087, 1083, 1072, 1052, 1028, 1000, 976, 948, 911, 870, 835, 800, 757, 711, 668, 624, 583, 552, 520],
      '#197a58': [1107, 1106, 1105, 1102, 1099, 1096, 1093, 1087, 1080, 1068, 1054, 1034, 1019, 1000, 976, 950, 926, 900, 870, 837, 809, 776, 750, 728, 707]
    },
    // pin: [slot, letter, dot y, box top]
    pins: [
      [6, 'B', 209, 68], [2, 'B', 459, 318], [3, 'S', 476, 335], [5, 'S', 350, 441], [12, 'S', 346, 437],
      [9, 'T', 245, 336], [10, 'T', 267, 360], [11, 'T', 282, 373], [8, 'T', 393, 484], [7, 'T', 483, 573],
      [4, 'B', 627, 718], [1, 'S', 693, 784], [0, 'B', 829, 920]
    ],
    high: { slot: 9, text: '16.66' },
    low: { x: 13, text: '7.84' },
    priceLine: 443,
    scale: [[50, '7'], [314, '9'], [605, '6']],
    dates: [[175, '-06-04', 'end', '#a5a2a4'], [342, '06-23', 'middle'], [598, '07-02', 'middle'], [897, '07-11', 'end']],
    ticks: [0, 7, 14],
    lastTick: 14,
    volume: [[0, 388], [0, 393], [1, 364], [0, 360], [1, 379], [0, 386], [1, 333], [1, 385], [1, 238], [1, 141], [1, 141], [0, 147], [1, 106], [1, 104], [1, 153], [0, 156], [1, 195], [1, 158], [0, 136], [0, 165], [1, 169], [0, 186], [0, 214], [1, 258]],
    volumeMa: {
      '#dedcdd': [378, 379, 382, 380, 377, 375, 373, 362, 367, 343, 297, 247, 209, 155, 127, 130, 134, 145, 153, 160, 162, 165, 163, 174, 199],
      '#ee6f3a': [378, 378, 379, 376, 372, 374, 376, 373, 374, 359, 337, 312, 286, 261, 235, 214, 191, 178, 153, 144, 147, 150, 153, 164, 180]
    },
    zero: 371,
    macd: [368, 369, 367, 366, 365, 366, 354, 327, 295, 267, 234, 236, 234, 217, 190, 212, 230, 223, 231, 261, 276, 310, 368, 404],
    macdLines: {
      '#dedcdd': [354, 356, 358, 354, 353, 353, 352, 343, 324, 299, 274, 240, 224, 205, 178, 142, 134, 126, 104, 91, 91, 89, 95, 123, 148],
      '#ee6f3a': [355, 356, 357, 356, 356, 355, 354, 353, 348, 337, 324, 308, 291, 273, 253, 231, 212, 194, 176, 160, 145, 133, 125, 125, 130]
    }
  }
};

function add(svg, name, attrs, text) {
  const node = document.createElementNS('http://www.w3.org/2000/svg', name);
  for (const key in attrs) node.setAttribute(key, attrs[key]);
  if (text !== undefined) node.textContent = text;
  svg.appendChild(node);
  return node;
}

function line(svg, x1, y1, x2, y2, attrs) {
  return add(svg, 'line', Object.assign({ x1, y1, x2, y2 }, attrs));
}

// The first value of a series lies on the left edge, the rest on the slots.
function trends(svg, lines) {
  for (const color in lines) {
    const points = lines[color].map((y, i) => (i ? slotX(FIRST + i - 1) : 0) + ',' + y).join(' ');
    add(svg, 'polyline', { points, class: 'trend', stroke: color });
  }
}

function drawPin(svg, [slot, letter, dot, top]) {
  const x = slotX(slot);
  const below = top > dot;
  const trade = letter === 'T';
  const fill = trade ? '#b85a10' : '#949694';
  const edge = below ? top : top + 60;
  const tip = below ? top - 9 : top + 69;
  line(svg, x, dot, x, tip, { stroke: trade ? '#c0661c' : '#c4c4c4', 'stroke-width': 3, 'stroke-dasharray': '26 6 6 6' });
  add(svg, 'circle', { cx: x, cy: dot, r: 10, fill, opacity: 0.75 });
  const box = add(svg, 'g', { fill, opacity: 0.78 });
  add(box, 'rect', { x: x - 30, y: top, width: 60, height: 60, rx: 5 });
  add(box, 'path', { d: `M${x - 14} ${edge}L${x} ${tip}L${x + 14} ${edge}z` });
  add(svg, 'text', { x, y: top + 48, class: 'pin' }, letter);
}

const DRAW = {
  kline(svg, s) {
    [289, 580, 871].forEach(y => line(svg, 8, y, 902, y, { class: 'grid' }));
    add(svg, 'path', { d: 'M0 1H902V1160H0', class: 'frame' });
    s.scale.forEach(([y, t]) => add(svg, 'text', { x: 5, y, class: 'scale' }, t));
    if (s.priceLine) line(svg, 8, s.priceLine, 896, s.priceLine, { class: 'price-line' });
    s.candles.forEach(([slot, up, high, top, bottom, low]) => {
      const x = slotX(slot);
      if (up) {
        line(svg, x, high, x, low, { class: 'up-wick' });
        if (top === bottom) line(svg, x - 14, top, x + 14, top, { class: 'up-wick' });
        else add(svg, 'rect', { x: x - 13, y: top + 3, width: 26, height: Math.max(4, bottom - top - 6), class: 'up-candle' });
      } else {
        line(svg, x, high, x, low, { class: 'down-wick' });
        add(svg, 'rect', { x: x - 14, y: top, width: 28, height: bottom - top, class: 'down-candle' });
      }
    });
    s.pins.forEach(pin => drawPin(svg, pin));
    trends(svg, s.ma);

    const tip = slotX(s.high.slot);
    add(svg, 'text', { x: tip - 246, y: 49, class: 'extreme' }, s.high.text);
    add(svg, 'path', { d: `M${tip - 85} 21H${tip - 2}M${tip - 30} 5L${tip - 2} 21L${tip - 30} 37`, fill: 'none', stroke: '#fff', 'stroke-width': 6 });
    const x = s.low.x;
    add(svg, 'text', { x: x + 120, y: 1155, class: 'extreme' }, s.low.text);
    add(svg, 'path', { d: `M${x + 84} 1140H${x + 2}M${x + 30} 1124L${x + 2} 1140L${x + 30} 1156`, fill: 'none', stroke: '#fff', 'stroke-width': 5 });
    if (s.note) {
      add(svg, 'path', { d: 'M153 1146H96M106 1135L96 1146L106 1157', fill: 'none', stroke: '#d83a34', 'stroke-width': 4 });
      add(svg, 'path', { d: 'M134 1128V1088M134 1097a12 14 0 1 0 0 10', fill: 'none', stroke: '#ea4d3d', 'stroke-width': 5 });
    }
  },

  axis(svg, s) {
    for (let k = -4; k <= s.lastTick; k++) {
      const major = s.ticks.includes(k);
      line(svg, slotX(k), 0, slotX(k), major ? 25 : 15, { stroke: major ? '#a09ea0' : '#454445', 'stroke-width': major ? 5 : 2 });
    }
    s.dates.forEach(([x, t, anchor, fill]) => {
      const node = add(svg, 'text', { x, y: 89, class: 'date', 'text-anchor': anchor }, t);
      if (fill) node.style.fill = fill;
    });
  },

  volume(svg, s) {
    add(svg, 'path', { d: 'M0 2H902V403H0', class: 'frame' });
    line(svg, 8, 201, 902, 201, { class: 'grid' });
    s.volume.forEach(([up, top], i) => {
      const x = slotX(FIRST + i);
      if (up) add(svg, 'rect', { x: x - 13, y: top + 2, width: 27, height: 402 - top, fill: 'none', stroke: RED, 'stroke-width': 4 });
      else add(svg, 'rect', { x: x - 14, y: top, width: 28, height: 405 - top, fill: GREEN });
    });
    trends(svg, s.volumeMa);
  },

  macd(svg, s) {
    add(svg, 'path', { d: 'M0 2H902V403H0', class: 'frame' });
    line(svg, 8, 202, 902, 202, { class: 'grid' });
    s.macd.forEach((y, i) => {
      const x = slotX(FIRST + i);
      line(svg, x, s.zero, x, y, { stroke: y > s.zero ? GREEN : RED, 'stroke-width': 4 });
    });
    trends(svg, s.macdLines);
  }
};

document.querySelectorAll('svg[data-chart]').forEach(svg => {
  DRAW[svg.dataset.chart](svg, STOCKS[svg.dataset.code]);
});
```
